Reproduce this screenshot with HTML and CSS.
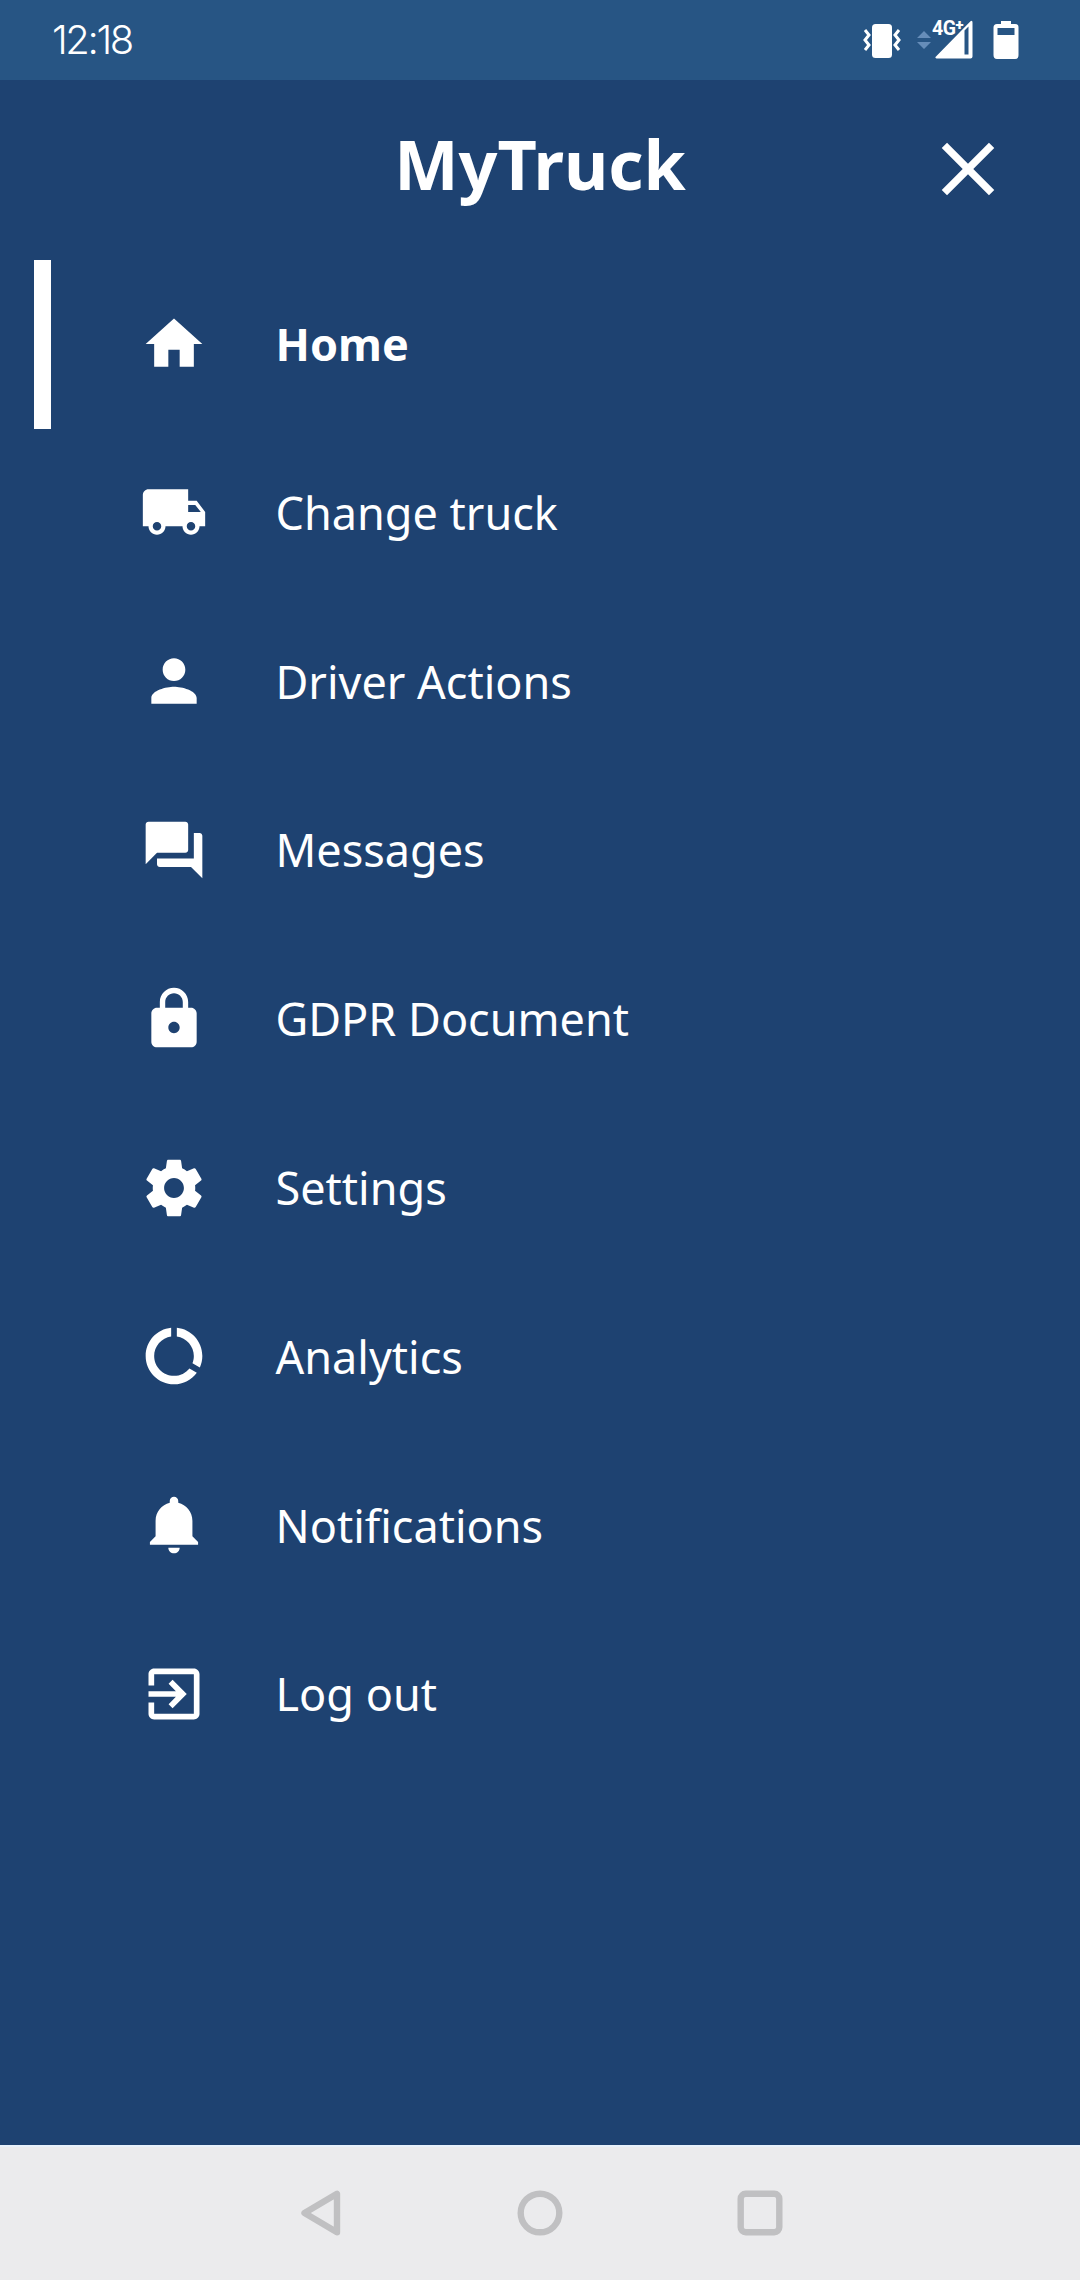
FILE: index.html
```html
<!DOCTYPE html>
<html lang="en">
<head>
<meta charset="utf-8">
<title>MyTruck</title>
<link rel="stylesheet" href="styles.css">
</head>
<body>
<div class="screen">
  <header class="status">
    <span class="time">12:18</span>
    <div class="status-icons">
      <svg class="vibrate" width="38" height="36" viewBox="0 0 38 36"><rect x="9" y="1" width="20" height="34" rx="3.5" fill="#fff"/><path d="M2 7l4 5-4 5 4 5-4 5M36 7l-4 5 4 5-4 5 4 5" fill="none" stroke="#fff" stroke-width="3"/></svg>
      <svg class="data" width="14" height="18" viewBox="0 0 14 18"><path d="M7 0l7 7H0zM0 11h14l-7 7z" fill="#668db9"/></svg>
      <div class="signal">
        <svg width="38" height="39" viewBox="0 0 38 39"><path fill="#fff" fill-rule="evenodd" d="M35.500 1.300Q37.500 0 37.500 2.500V36.500Q37.500 38.500 35.500 38.500H1.500Q-.5 38 1 36.500zM29.500 10.500V34.500H33.500V6.500z"/></svg>
        <span class="network">4G<b class="plus">+</b></span>
      </div>
      <svg class="battery" width="26" height="38" viewBox="0 0 26 38"><path fill="#fff" fill-rule="evenodd" d="M8 0h10v3h4q3.500 0 3.500 3.500V34q0 4-3.500 4H4q-3.500 0-3.500-4V6.500Q.5 3 4 3h4zM4.500 7v7h17V7z"/></svg>
    </div>
  </header>

  <div class="top">
    <h1 class="title">MyTruck</h1>
    <svg class="close" viewBox="0 0 24 24"><path d="M19 6.410 17.590 5 12 10.590 6.410 5 5 6.410 10.590 12 5 17.590 6.410 19 12 13.410 17.590 19 19 17.590 13.410 12z"/></svg>
  </div>

  <nav class="menu">
    <a class="item active"><svg class="icon" viewBox="0 0 24 24"><path d="M10 20v-6h4v6h5v-8h3L12 3 2 12h3v8z"/></svg><span>Home</span></a>
    <a class="item"><svg class="icon" viewBox="0 0 24 24"><path d="M20 8h-3V4H3c-1.100 0-2 .9-2 2v11h2c0 1.660 1.340 3 3 3s3-1.340 3-3h6c0 1.660 1.340 3 3 3s3-1.340 3-3h2v-5l-3-4zM6 18.500c-.83 0-1.500-.67-1.500-1.500s.67-1.500 1.500-1.500 1.500.67 1.500 1.500-.67 1.500-1.500 1.500zm13.500-9l1.960 2.500H17V9.500h2.500zm-1.500 9c-.83 0-1.500-.67-1.500-1.500s.67-1.500 1.500-1.500 1.500.67 1.500 1.500-.67 1.500-1.500 1.500z"/></svg><span>Change truck</span></a>
    <a class="item"><svg class="icon" viewBox="0 0 24 24"><path d="M12 12c2.210 0 4-1.790 4-4s-1.790-4-4-4-4 1.790-4 4 1.790 4 4 4zm0 2c-2.670 0-8 1.340-8 4v2h16v-2c0-2.660-5.330-4-8-4z"/></svg><span>Driver Actions</span></a>
    <a class="item"><svg class="icon" viewBox="0 0 24 24"><path d="M21 6h-2v9H6v2c0 .55.45 1 1 1h11l4 4V7c0-.55-.45-1-1-1zm-4 6V3c0-.55-.45-1-1-1H3c-.55 0-1 .45-1 1v14l4-4h10c.55 0 1-.45 1-1z"/></svg><span>Messages</span></a>
    <a class="item"><svg class="icon" viewBox="0 0 24 24"><path d="M18 8h-1V6c0-2.760-2.240-5-5-5S7 3.240 7 6v2H6c-1.100 0-2 .9-2 2v10c0 1.100.9 2 2 2h12c1.100 0 2-.9 2-2V10c0-1.100-.9-2-2-2zm-6 9c-1.100 0-2-.9-2-2s.9-2 2-2 2 .9 2 2-.9 2-2 2zm3.100-9H8.900V6c0-1.710 1.390-3.100 3.100-3.100s3.100 1.390 3.100 3.100v2z"/></svg><span>GDPR Document</span></a>
    <a class="item"><svg class="icon" viewBox="0 0 24 24"><path d="M19.430 12.980c.04-.32.07-.64.07-.98s-.03-.66-.07-.98l2.110-1.650c.19-.15.24-.42.12-.64l-2-3.460c-.12-.22-.39-.3-.61-.22l-2.490 1c-.52-.4-1.080-.73-1.690-.98l-.38-2.650C14.460 2.180 14.250 2 14 2h-4c-.25 0-.46.18-.49.42l-.38 2.650c-.61.25-1.170.59-1.690.98l-2.490-1c-.23-.09-.49 0-.61.22l-2 3.460c-.13.22-.07.49.12.64l2.110 1.650c-.04.32-.07.65-.07.98s.03.66.07.98l-2.110 1.650c-.19.15-.24.42-.12.64l2 3.460c.12.22.39.3.61.22l2.490-1c.52.4 1.080.73 1.690.98l.38 2.650c.03.24.24.42.49.42h4c.25 0 .46-.18.49-.42l.38-2.650c.61-.25 1.170-.59 1.690-.98l2.490 1c.23.09.49 0 .61-.22l2-3.460c.12-.22.07-.49-.12-.64l-2.110-1.650zM12 15.500c-1.930 0-3.500-1.570-3.500-3.500s1.570-3.500 3.500-3.500 3.500 1.570 3.500 3.500-1.570 3.500-3.500 3.500z"/></svg><span>Settings</span></a>
    <a class="item"><svg class="icon" viewBox="0 0 24 24"><path d="M13 2.050v3.030c3.390.49 6 3.390 6 6.920 0 .9-.18 1.750-.48 2.540l2.600 1.530c.56-1.240.88-2.620.88-4.070 0-5.180-3.950-9.450-9-9.950zM12 19c-3.870 0-7-3.130-7-7 0-3.530 2.610-6.430 6-6.920V2.050c-5.060.5-9 4.760-9 9.950 0 5.520 4.470 10 9.990 10 3.310 0 6.240-1.610 8.060-4.090l-2.600-1.530C16.170 17.980 14.210 19 12 19z"/></svg><span>Analytics</span></a>
    <a class="item"><svg class="icon" viewBox="-.5 0 24 24"><path d="M11.500 22c1.100 0 2-.9 2-2h-4c0 1.100.9 2 2 2zm6.500-6v-5.500c0-3.070-2.130-5.640-5-6.320V3.500c0-.83-.67-1.500-1.500-1.500S10 2.670 10 3.500v.68c-2.870.68-5 3.250-5 6.320V16l-2 2v1h17v-1l-2-2z"/></svg><span>Notifications</span></a>
    <a class="item"><svg class="icon" viewBox="0 0 24 24"><path d="M10.090 15.590L11.500 17l5-5-5-5-1.410 1.410L12.670 11H3v2h9.670l-2.580 2.590zM19 3H5c-1.110 0-2 .9-2 2v4h2V5h14v14H5v-4H3v4c0 1.100.89 2 2 2h14c1.100 0 2-.9 2-2V5c0-1.100-.9-2-2-2z"/></svg><span>Log out</span></a>
  </nav>

  <footer class="navbar">
    <svg class="key" viewBox="0 0 48 48"><path d="M8.500 24 41 4.800V43.200z"/></svg>
    <svg class="key" viewBox="0 0 48 48"><circle cx="24" cy="24" r="19.300"/></svg>
    <svg class="key" viewBox="0 0 48 48"><rect x="4.700" y="4.700" width="38.600" height="38.600" rx="5"/></svg>
  </footer>
</div>
</body>
</html>
```
FILE: styles.css
```css
* { box-sizing: border-box; }
body { margin: 0; background: #1e4271; }

.screen {
  width: 1080px;
  height: 2280px;
  display: flex;
  flex-direction: column;
  background: #1e4271;
  color: #fff;
  font-family: "Noto Sans", sans-serif;
}

/* Status bar */
.status {
  height: 80px;
  flex: none;
  display: flex;
  justify-content: space-between;
  padding: 0 61px 0 52px;
  background: #275584;
}
.time {
  font: 300 40px/80px Inter, sans-serif;
  letter-spacing: -2.4px;
}
.status-icons { display: flex; align-items: flex-start; }
.vibrate { margin-top: 23px; }
.data { margin: 31px 0 0 16px; }
.signal { position: relative; height: 39px; margin: 20px 0 0 4px; }
.signal svg { display: block; }
.network {
  position: absolute;
  left: -3px;
  top: -1px;
  font: 700 19.5px/20px Roboto, sans-serif;
  letter-spacing: -.5px;
  white-space: nowrap;
}
.plus { font-size: 15px; position: relative; top: -5px; }
.battery { margin: 21px 0 0 20px; }

/* Drawer header */
.top {
  height: 180px;
  flex: none;
  display: grid;
  grid-template-columns: 1fr auto 1fr;
  padding: 38px 67px 0;
}
.title {
  grid-column: 2;
  margin: 0;
  font-size: 68.2px;
  line-height: 92px;
  font-weight: 700;
}
.close {
  justify-self: end;
  width: 90px;
  height: 90px;
  margin-top: 6px;
  fill: #fff;
}

/* Menu */
.menu { flex: 1; }
.item {
  height: 168.8px;
  margin-left: 34px;
  padding: 0 0 .8px 106px;
  display: flex;
  align-items: center;
  gap: 67.5px;
  font-size: 45px;
  line-height: 62px;
}
.active {
  padding-left: 89px;
  border-left: 17px solid #fff;
  font-weight: 700;
}
.icon { width: 68px; height: 68px; margin-bottom: .8px; fill: #fff; }

/* System navigation */
.navbar {
  height: 135px;
  flex: none;
  display: flex;
  justify-content: center;
  align-items: center;
  gap: 172px;
  padding-bottom: 2px;
  background: #ebebed;
  border-top: 2px solid #e8f1fb;
}
.key {
  width: 48px;
  height: 48px;
  fill: none;
  stroke: #c0c0c2;
  stroke-width: 6.4;
  stroke-linejoin: round;
}
```
